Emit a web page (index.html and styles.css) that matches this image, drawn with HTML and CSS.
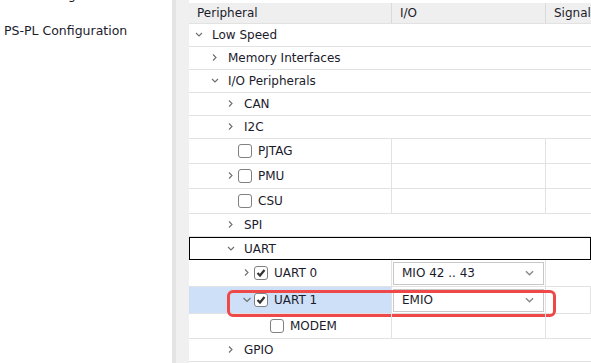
FILE: index.html
```html
<!doctype html>
<html>
<head>
  <meta charset="utf-8">
  <link rel="stylesheet" href="styles.css">
</head>
<body>
  <div class="nav">
    <div class="nav-item">DDR Configuration</div>
    <div class="nav-item">PS-PL Configuration</div>
  </div>
  <div class="splitter"></div>

  <div class="tree">
    <div class="row head">
      <div class="cell">Peripheral</div>
      <div class="cell">I/O</div>
      <div class="cell">Signal</div>
    </div>

    <div class="row group">
      <div class="cell l1"><svg class="chev" viewBox="0 0 12 12"><polyline points="2,4 5,7 8,4"/></svg><span class="txt">Low Speed</span></div>
      <div class="cell"></div><div class="cell"></div>
    </div>
    <div class="row group">
      <div class="cell l2"><svg class="chev" viewBox="0 0 12 12"><polyline points="3,2.5 6,5.5 3,8.5"/></svg><span class="txt">Memory Interfaces</span></div>
      <div class="cell"></div><div class="cell"></div>
    </div>
    <div class="row group">
      <div class="cell l2"><svg class="chev" viewBox="0 0 12 12"><polyline points="2,4 5,7 8,4"/></svg><span class="txt">I/O Peripherals</span></div>
      <div class="cell"></div><div class="cell"></div>
    </div>
    <div class="row group">
      <div class="cell l3"><svg class="chev" viewBox="0 0 12 12"><polyline points="3,2.5 6,5.5 3,8.5"/></svg><span class="txt">CAN</span></div>
      <div class="cell"></div><div class="cell"></div>
    </div>
    <div class="row group">
      <div class="cell l3"><svg class="chev" viewBox="0 0 12 12"><polyline points="3,2.5 6,5.5 3,8.5"/></svg><span class="txt">I2C</span></div>
      <div class="cell"></div><div class="cell"></div>
    </div>
    <div class="row leaf">
      <div class="cell l3"><span class="slot"></span><span class="box"></span><span class="lbl">PJTAG</span></div>
      <div class="cell"></div><div class="cell"></div>
    </div>
    <div class="row leaf">
      <div class="cell l3"><svg class="chev" viewBox="0 0 12 12"><polyline points="3,2.5 6,5.5 3,8.5"/></svg><span class="box"></span><span class="lbl">PMU</span></div>
      <div class="cell"></div><div class="cell"></div>
    </div>
    <div class="row leaf">
      <div class="cell l3"><span class="slot"></span><span class="box"></span><span class="lbl">CSU</span></div>
      <div class="cell"></div><div class="cell"></div>
    </div>
    <div class="row group">
      <div class="cell l3"><svg class="chev" viewBox="0 0 12 12"><polyline points="3,2.5 6,5.5 3,8.5"/></svg><span class="txt">SPI</span></div>
      <div class="cell"></div><div class="cell"></div>
    </div>
    <div class="row group focus">
      <div class="cell l3"><svg class="chev" viewBox="0 0 12 12"><polyline points="2,4 5,7 8,4"/></svg><span class="txt">UART</span></div>
      <div class="cell"></div><div class="cell"></div>
    </div>
    <div class="row leaf tall">
      <div class="cell l4"><svg class="chev" viewBox="0 0 12 12"><polyline points="3,2.5 6,5.5 3,8.5"/></svg><span class="box checked"><svg viewBox="0 0 12 12"><polyline points="2.5,6 5,8.5 9.5,3"/></svg></span><span class="lbl">UART 0</span></div>
      <div class="cell io"><div class="select"><span>MIO 42 .. 43</span><svg viewBox="0 0 10 6"><polyline points="1,1 5,5 9,1"/></svg></div></div>
      <div class="cell"></div>
    </div>
    <div class="row leaf tall picked">
      <div class="cell l4"><svg class="chev" viewBox="0 0 12 12"><polyline points="1.5,4 5,7.5 8.5,4"/></svg><span class="box checked"><svg viewBox="0 0 12 12"><polyline points="2.5,6 5,8.5 9.5,3"/></svg></span><span class="lbl">UART 1</span></div>
      <div class="cell io"><div class="select"><span>EMIO</span><svg viewBox="0 0 10 6"><polyline points="1,1 5,5 9,1"/></svg></div></div>
      <div class="cell"></div>
      <div class="mark"></div>
    </div>
    <div class="row leaf">
      <div class="cell l5"><span class="slot"></span><span class="box"></span><span class="lbl">MODEM</span></div>
      <div class="cell"></div><div class="cell"></div>
    </div>
    <div class="row group">
      <div class="cell l3"><svg class="chev" viewBox="0 0 12 12"><polyline points="3,2.5 6,5.5 3,8.5"/></svg><span class="txt">GPIO</span></div>
      <div class="cell"></div><div class="cell"></div>
    </div>
  </div>
</body>
</html>
```

FILE: styles.css
```css
body {
  margin: 0;
  width: 591px;
  height: 363px;
  overflow: hidden;
  display: flex;
  background: #ffffff;
  font-family: "DejaVu Sans", Verdana, sans-serif;
  color: #1b1b2c;
}

/* Navigator */
.nav {
  width: 172px;
  flex: none;
  margin-top: -23px;
}
.nav-item {
  height: 36px;
  line-height: 36px;
  padding-left: 4px;
  font-size: 12.5px;
  white-space: nowrap;
}
.splitter {
  width: 13px;
  flex: none;
  border-left: 4px solid #e4e4e4;
  background: #f0f0f0;
}

/* Tree table */
.tree {
  flex: 1;
  padding-top: 3px;
  font-size: 12px;
}
.row {
  display: grid;
  grid-template-columns: 203px 154px 1fr;
  border-bottom: 1px solid #e2e2e2;
  position: relative;
  box-sizing: border-box;
}
.row.group { height: 23px; }
.row.leaf { height: 25px; }
.row.tall { height: 27px; }
.cell {
  display: flex;
  align-items: center;
  white-space: nowrap;
  min-width: 0;
}
.row.leaf .cell:not(:last-child) {
  border-right: 1px solid #e2e2e2;
}
.head {
  height: 21px;
  background: #efefef;
}
.head .cell {
  padding-left: 8px;
}
.head .cell:not(:last-child) {
  border-right: 1px solid #dadada;
}
.focus {
  border: 1px solid #000000;
}
.focus .l3 { padding-left: 36px; }

.l1 { padding-left: 5px; }
.l2 { padding-left: 21px; }
.l3 { padding-left: 37px; }
.l4 { padding-left: 53px; }
.l5 { padding-left: 69px; }

.chev, .slot {
  width: 12px;
  height: 12px;
  flex: none;
}
.chev polyline {
  fill: none;
  stroke: #6e6e6e;
  stroke-width: 1.1;
}
.txt { margin-left: 6px; }
.lbl { margin-left: 6px; }

.box {
  width: 12px;
  height: 12px;
  flex: none;
  border: 1px solid #808080;
  border-radius: 3px;
  background: #ffffff;
  display: flex;
}
.box svg {
  width: 12px;
  height: 12px;
}
.box polyline {
  fill: none;
  stroke: #333333;
  stroke-width: 2.2;
}

.io { padding: 0 0 0 1px; }
.select {
  width: 151px;
  height: 23px;
  box-sizing: border-box;
  border: 1px solid #c8c8c8;
  display: flex;
  align-items: center;
  justify-content: space-between;
  padding: 0 9px 0 8px;
  background: #ffffff;
}
.select svg {
  width: 9px;
  height: 6px;
}
.select polyline {
  fill: none;
  stroke: #8a8a8a;
  stroke-width: 1.6;
}

.picked .cell:first-child {
  background: #cde0f8;
}
.mark {
  position: absolute;
  left: 38px;
  top: 3px;
  width: 329px;
  height: 27px;
  box-sizing: border-box;
  border: 3px solid #ee4848;
  border-radius: 6px;
}
```
